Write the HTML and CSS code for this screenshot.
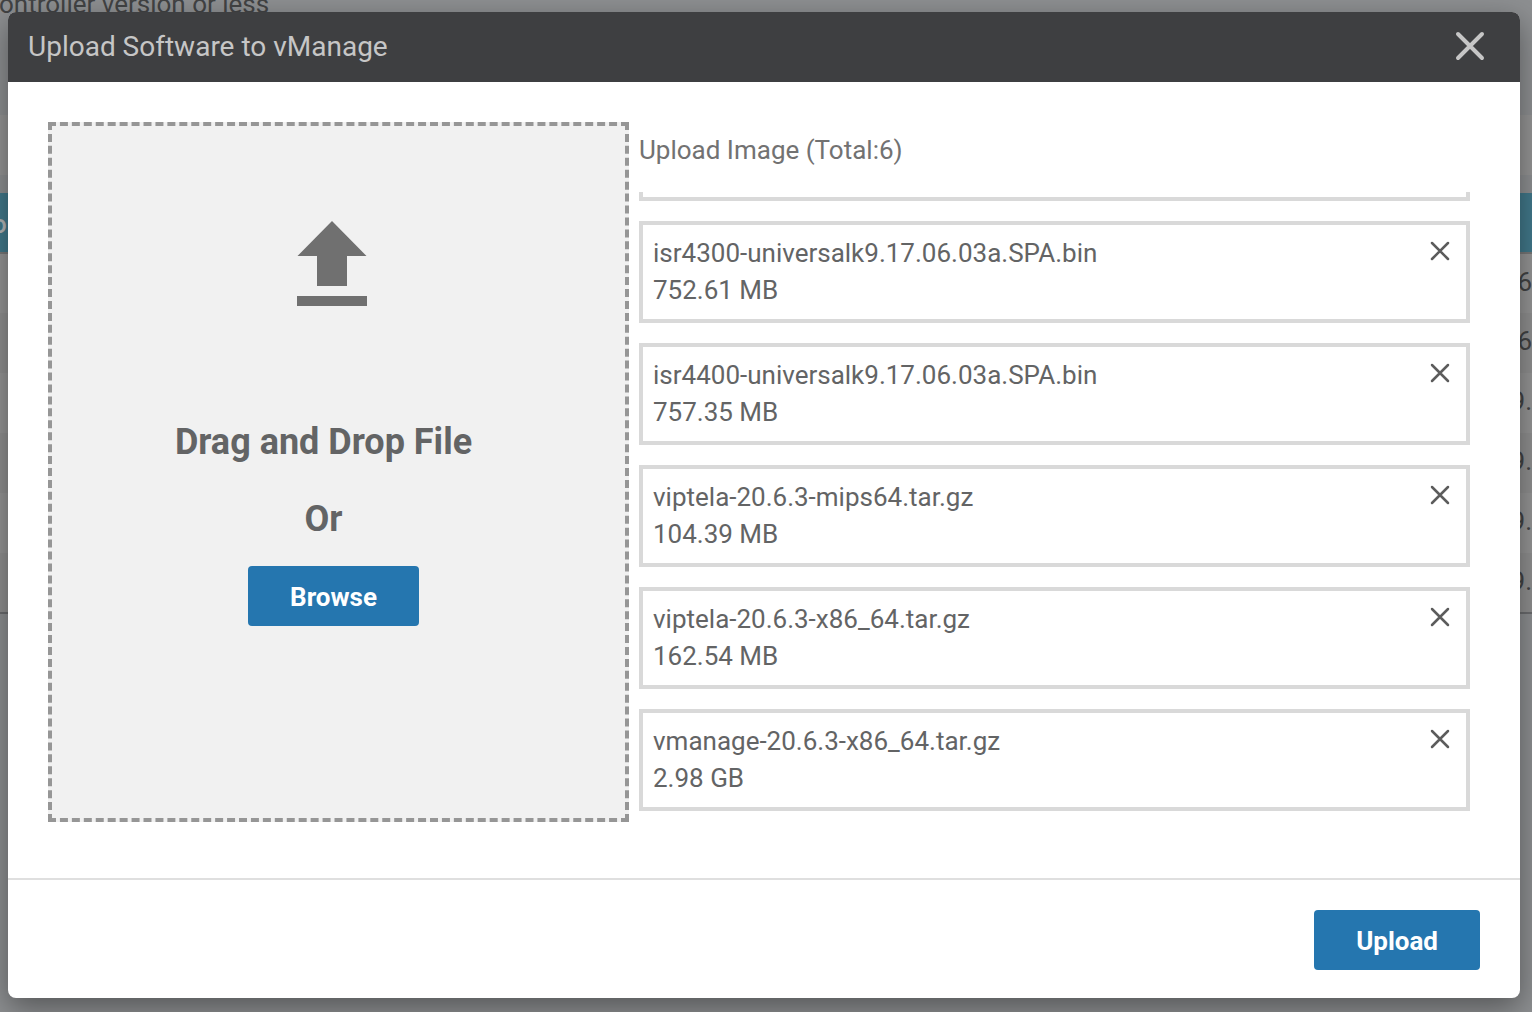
FILE: index.html
```html
<!DOCTYPE html>
<html lang="en">
<head>
<meta charset="utf-8">
<title>Upload Software to vManage</title>
<link rel="stylesheet" href="styles.css">
</head>
<body>
<main class="page">
  <p class="note">ontroller version or less</p>
  <div class="toolbar"></div>
  <table class="images">
    <thead><tr><th>or</th><th></th></tr></thead>
    <tbody>
      <tr><td></td><td>6</td></tr>
      <tr><td></td><td>6</td></tr>
      <tr><td></td><td>9.</td></tr>
      <tr><td></td><td>9.</td></tr>
      <tr><td></td><td>9.</td></tr>
      <tr><td></td><td>9.</td></tr>
    </tbody>
  </table>
</main>

<div class="modal" role="dialog" aria-modal="true" aria-labelledby="modal-title">
  <header class="modal-header">
    <h1 class="modal-title" id="modal-title">Upload Software to vManage</h1>
    <button class="close" type="button" aria-label="Close">
      <svg width="30" height="30" viewBox="0 0 30 30"><path d="M3 3 27 27M27 3 3 27"/></svg>
    </button>
  </header>

  <div class="modal-body">
    <section class="dropzone">
      <svg class="drop-icon" width="70" height="86" viewBox="0 0 70 86"><path d="M35 1 69.500 36H50V66H20V36H.5ZM0 76H70V86H0Z"/></svg>
      <p class="drop-text">Drag and Drop File</p>
      <p class="drop-text">Or</p>
      <button class="btn browse" type="button">Browse</button>
    </section>

    <section class="queue">
      <h2 class="queue-title">Upload Image (Total:6)</h2>
      <ul class="files">
        <li class="file"></li>
        <li class="file">
          <div><p class="name">isr4300-universalk9.17.06.03a.SPA.bin</p><p class="size">752.61 MB</p></div>
          <button class="remove" type="button" aria-label="Remove"><svg width="20" height="20" viewBox="0 0 20 20"><path d="M2 2 18 18M18 2 2 18"/></svg></button>
        </li>
        <li class="file">
          <div><p class="name">isr4400-universalk9.17.06.03a.SPA.bin</p><p class="size">757.35 MB</p></div>
          <button class="remove" type="button" aria-label="Remove"><svg width="20" height="20" viewBox="0 0 20 20"><path d="M2 2 18 18M18 2 2 18"/></svg></button>
        </li>
        <li class="file">
          <div><p class="name">viptela-20.6.3-mips64.tar.gz</p><p class="size">104.39 MB</p></div>
          <button class="remove" type="button" aria-label="Remove"><svg width="20" height="20" viewBox="0 0 20 20"><path d="M2 2 18 18M18 2 2 18"/></svg></button>
        </li>
        <li class="file">
          <div><p class="name">viptela-20.6.3-x86_64.tar.gz</p><p class="size">162.54 MB</p></div>
          <button class="remove" type="button" aria-label="Remove"><svg width="20" height="20" viewBox="0 0 20 20"><path d="M2 2 18 18M18 2 2 18"/></svg></button>
        </li>
        <li class="file">
          <div><p class="name">vmanage-20.6.3-x86_64.tar.gz</p><p class="size">2.98 GB</p></div>
          <button class="remove" type="button" aria-label="Remove"><svg width="20" height="20" viewBox="0 0 20 20"><path d="M2 2 18 18M18 2 2 18"/></svg></button>
        </li>
      </ul>
    </section>
  </div>

  <footer class="modal-footer">
    <button class="btn" type="button">Upload</button>
  </footer>
</div>
</body>
</html>
```
FILE: styles.css
```css
* { box-sizing: border-box; }

body {
  margin: 0;
  min-height: 100vh;
  overflow: hidden;
  background: #8d8f91;
  color: #636465;
  font-family: Roboto, "Liberation Sans", sans-serif;
  font-size: 26px;
}

h1, h2, p, ul { margin: 0; padding: 0; font-weight: 400; }
button { padding: 0; border: 0; background: none; font: inherit; cursor: pointer; }
svg { display: block; }

/* Dimmed page under the dialog */
.page { color: #424344; }
.note { height: 115px; margin-left: -1px; line-height: 8px; }
.toolbar { height: 60px; margin-bottom: 18px; background: #949494; }
.images {
  width: 100%;
  table-layout: fixed;
  border-collapse: collapse;
  border-bottom: 2px solid #6b6c6e;
  background: #949494;
}
.images th, .images td { height: 60px; padding: 0 0 4px; text-align: right; line-height: 30px; }
.images th {
  padding: 2px 0 0;
  border-bottom: 2px solid #777;
  background: #41788a;
  color: #b4b6b7;
  font-weight: 500;
}
.images th:first-child { text-align: left; text-indent: -8px; }
.images tbody tr:nth-child(even) { background: #8f8f8f; }

/* Dialog */
.modal {
  position: absolute;
  top: 12px;
  left: 8px;
  right: 12px;
  overflow: hidden;
  border-radius: 8px;
  background: #fff;
  box-shadow: 0 10px 30px rgba(0, 0, 0, .4);
}
.modal-header {
  display: flex;
  align-items: center;
  justify-content: space-between;
  height: 70px;
  padding: 0 35px 2px 20px;
  background: #3e3f41;
  color: #c6c6c6;
}
.modal-title { font-size: 28px; }
.close { color: #c6c6c6; }
.close path, .remove path {
  fill: none;
  stroke: currentColor;
  stroke-width: 4;
  stroke-linecap: round;
}

.modal-body {
  display: grid;
  grid-template-columns: 581fr 831fr;
  gap: 10px;
  padding: 40px 50px 56px 40px;
}
.dropzone {
  display: flex;
  flex-direction: column;
  align-items: center;
  height: 700px;
  padding: 94px 30px 0 0;
  border: 4px dashed #969696;
  background: #f1f1f1;
}
.drop-icon { margin: 0 0 114px 16px; fill: #707070; }
.drop-text {
  margin-bottom: 33px;
  font-size: 36px;
  font-weight: 700;
  line-height: 44px;
}
.browse { margin: -8px 0 0 20px; }

.queue { min-width: 0; }
.queue-title { height: 70px; color: #727272; font-size: 26px; line-height: 56px; }
.files {
  display: flex;
  flex-direction: column;
  justify-content: flex-end;
  gap: 20px;
  height: 620px;
  padding-bottom: 1px;
  overflow: hidden;
  list-style: none;
}
.file {
  display: flex;
  flex: none;
  align-items: flex-start;
  justify-content: space-between;
  height: 102px;
  padding: 10px 16px 0 10px;
  border: 4px solid #d9d9d9;
}
.name, .size { line-height: 37px; }
.remove { padding-top: 6px; color: #5c5c5c; }
.remove path { stroke-width: 2.5; }

.modal-footer {
  display: flex;
  justify-content: flex-end;
  padding: 30px 40px 28px;
  border-top: 2px solid #dfdfdf;
}
.btn {
  height: 60px;
  padding: 2px 42px 0;
  border-radius: 4px;
  background: #2576af;
  color: #fff;
  font-weight: 700;
}
```
